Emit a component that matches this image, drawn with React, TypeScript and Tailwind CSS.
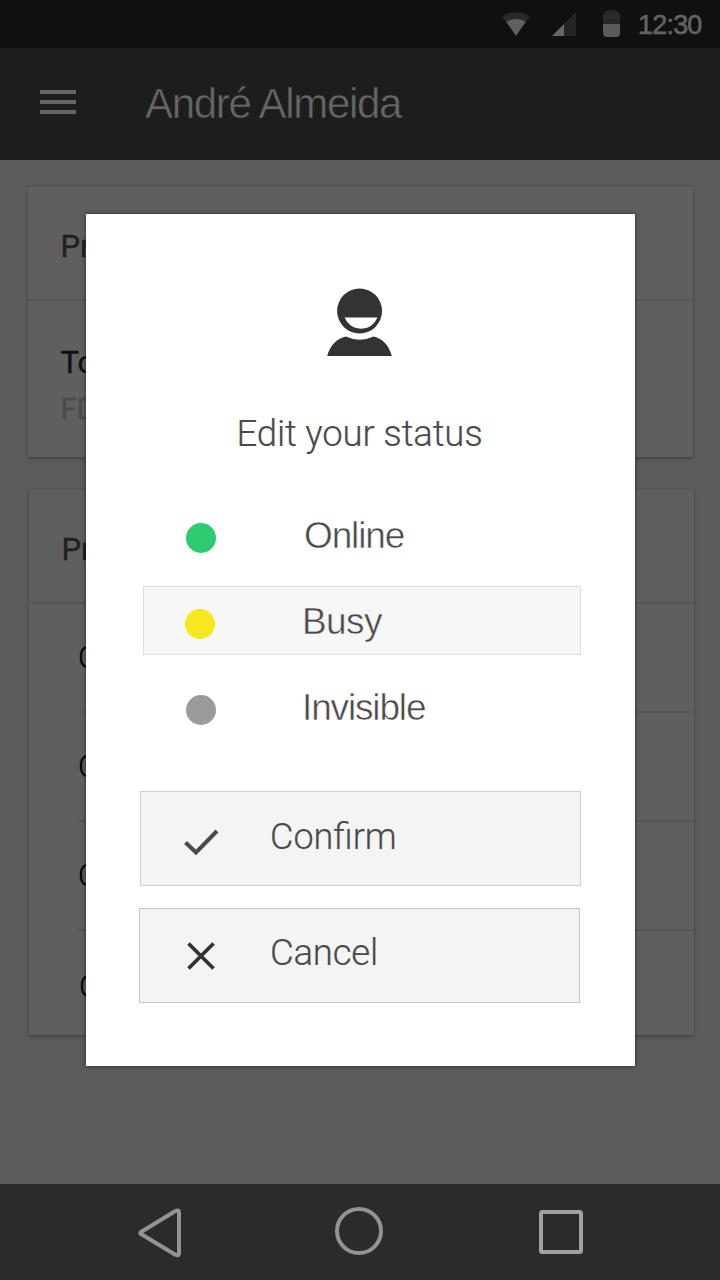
import type { ReactNode } from "react";

const HELV = "font-['Liberation_Sans',Arial,sans-serif]";

function StatusBar() {
  return (
    <div className="flex h-12 shrink-0 items-center justify-end bg-[#101010] pr-[18px]">
      <svg width="124" height="48" viewBox="0 0 124 48" className="mr-[14px] block">
        <path d="M2 16.5Q16 7.500 30 16.500L16 36Z" fill="#282828" />
        <path d="M6.300 21.500Q16 16.500 25.700 21.500L16 36Z" fill="#606060" />
        <path d="M52 36L76 12V36Z" fill="#242424" />
        <path d="M52 36L64 24V36Z" fill="#666" />
        <path d="M103 24V16Q103 10 111.500 10Q120 10 120 16V24Z" fill="#282828" />
        <path d="M103 24H120V33Q120 37 116 37H107Q103 37 103 33Z" fill="#5a5a5a" />
        <path d="M103 17.500H120" stroke="#303030" strokeWidth="1" />
      </svg>
      <span className={`${HELV} mt-px w-[64px] whitespace-nowrap text-[27px] leading-[48px] tracking-[-0.800px] text-[#636363] [-webkit-text-stroke:0.600px_#636363]`}>
        12:30
      </span>
    </div>
  );
}

function AppBar() {
  return (
    <div className="flex h-28 shrink-0 items-center bg-[#1d1d1d] pl-10">
      <div className="flex w-9 flex-col gap-[6px] pb-1">
        <div className="h-1 bg-[#666]" />
        <div className="h-1 bg-[#666]" />
        <div className="h-1 bg-[#666]" />
      </div>
      <h1 className={`${HELV} ml-[69px] whitespace-nowrap text-[42px] leading-[52px] tracking-[-1.320px] text-[#666] [-webkit-text-stroke:0.500px_#1d1d1d]`}>
        André Almeida
      </h1>
    </div>
  );
}

function Card({ className, children }: { className: string; children: ReactNode }) {
  return (
    <div className={`bg-[#5f5f5f] font-[Roboto,sans-serif] shadow-[0_2px_3px_rgba(0,0,0,0.220),0_0_3px_rgba(0,0,0,0.100)] ${className}`}>
      {children}
    </div>
  );
}

function Backdrop() {
  return (
    <div className="flex grow flex-col bg-[#5b5b5b] pt-[27px]">
      <Card className="ml-7 h-[270px] w-[665px]">
        <div className="h-[114px] border-b-2 border-[#565656] pt-[40px] pl-[32.500px] text-[31px] leading-10 text-[#202020] [-webkit-text-stroke:0.400px_#202020]">Pr</div>
        <div className="pt-[42px] pl-[32.500px] text-[31px] leading-10 text-[#101010] [-webkit-text-stroke:0.400px_#101010]">To</div>
        <div className="pt-[6px] pl-[32.500px] text-[29px] leading-10 text-[#4b4b4b] [-webkit-text-stroke:0.300px_#4b4b4b]">FD</div>
      </Card>
      <Card className="mt-[33px] ml-[29px] h-[545px] w-[665px]">
        <div className="h-[114px] border-b-2 border-[#565656] pt-[40px] pl-[32.500px] text-[31px] leading-10 text-[#202020] [-webkit-text-stroke:0.400px_#202020]">Pr</div>
        <div className="ml-[50px] text-[31px] font-light leading-[107px] text-black [-webkit-text-stroke:0.300px_black]">
          <div className="h-[109px] border-b-2 border-[#565656] -indent-px">C</div>
          <div className="h-[109px] border-b-2 border-[#565656] -indent-px">C</div>
          <div className="h-[109px] border-b-2 border-[#565656] -indent-px">C</div>
          <div className="h-[104px] pt-[2px]">C</div>
        </div>
      </Card>
    </div>
  );
}

function NavBar() {
  return (
    <div className="h-24 shrink-0 bg-[#2b2b2b]">
      <svg width="720" height="96" viewBox="0 0 720 96" fill="none" stroke="#939393" strokeWidth="4" className="block">
        <path d="M141 48L175 27.200Q179 25.200 179 28.500V69.500Q179 72.500 175 70.500L141 50Q139.500 49 141 48Z" strokeLinejoin="round" />
        <circle cx="359" cy="47" r="22" />
        <rect x="541" y="28" width="40" height="40" rx="1.500" stroke="#a1a1a1" />
      </svg>
    </div>
  );
}

function StatusDialog() {
  return (
    <div className="absolute top-[214px] left-[86px] flex h-[852px] w-[548.5px] flex-col bg-white text-[#4a4a4a] shadow-[0_0_4px_rgba(0,0,0,0.600)]">
      <svg width="66" height="68" viewBox="0 0 66 68" className="mt-[74px] ml-[241px] block shrink-0" fill="#333">
        <circle cx="32.600" cy="23" r="22.500" />
        <path d="M17.500 29.500H50.500Q45.500 40.800 34 40.800Q22.500 40.300 17.500 29.500Z" fill="#fff" />
        <path d="M0.200 68C3 57.500 9.500 50.500 19 48.400Q32.600 55 46.500 48.400C56 50.500 62 57.500 64.800 68Z" />
      </svg>
      <h2 className="mt-[56px] ml-[150.500px] whitespace-nowrap font-[Roboto,sans-serif] text-[36.500px] font-light leading-[44px] tracking-[-0.150px] [-webkit-text-stroke:0.200px_#4a4a4a]">
        Edit your status
      </h2>
      <div className={`${HELV} mt-[44px] ml-[57px] flex w-[438px] flex-col gap-[17px] text-[37px] leading-[69px]`}>
        <div className="flex h-[69px] items-center pl-[43px]">
          <div className="mt-[6px] h-[30px] w-[30px] rounded-full bg-[#2ecc71]" />
          <span className="mt-[2px] ml-[88px] whitespace-nowrap tracking-[-1.150px] [-webkit-text-stroke:0.500px_#fff]">Online</span>
        </div>
        <div className="flex h-[69px] items-center border border-[#dedede] bg-[#f7f7f7] pl-[41px]">
          <div className="mt-[6px] h-[30px] w-[30px] rounded-full bg-[#f8e71c]" />
          <span className="mt-[2px] ml-[87px] whitespace-nowrap tracking-[-0.600px] [-webkit-text-stroke:0.500px_#f7f7f7]">Busy</span>
        </div>
        <div className="flex h-[69px] items-center pl-[43px]">
          <div className="mt-[7px] h-[30px] w-[30px] rounded-full bg-[#9b9b9b]" />
          <span className="mt-[2px] ml-[86px] whitespace-nowrap tracking-[-1.150px] [-webkit-text-stroke:0.500px_#fff]">Invisible</span>
        </div>
      </div>
      <div className="mt-[50px] ml-[53px] flex w-[442px] flex-col gap-[22px] font-[Roboto,sans-serif] text-[36.500px] font-light leading-[91px] [-webkit-text-stroke:0.200px_#4a4a4a]">
        <div className="ml-px flex h-[95px] items-start border border-[#cfcfcf] bg-[#f4f4f4] pl-[42px]">
          <svg width="36" height="30" viewBox="0 0 36 30" className="mt-[36px] block" fill="none" stroke="#4a4a4a" strokeWidth="4">
            <path d="M2.500 14.500L13 24.500L34 3" />
          </svg>
          <span className="ml-[51px] whitespace-nowrap text-[36px]">Confirm</span>
        </div>
        <div className="flex h-[95px] w-[441px] items-start border border-[#c6c6c6] bg-[#f4f4f4] pl-[47px]">
          <svg width="28" height="28" viewBox="0 0 28 28" className="mt-[33px] block" fill="none" stroke="#333" strokeWidth="3.800">
            <path d="M1.500 1.500L26.500 26.500M26.500 1.500L1.500 26.500" />
          </svg>
          <span className="ml-[55px] whitespace-nowrap leading-[87px] tracking-[-0.200px]">Cancel</span>
        </div>
      </div>
    </div>
  );
}

export default function App() {
  return (
    <div className="relative flex h-[1280px] w-[720px] flex-col overflow-hidden">
      <StatusBar />
      <AppBar />
      <Backdrop />
      <NavBar />
      <StatusDialog />
    </div>
  );
}
